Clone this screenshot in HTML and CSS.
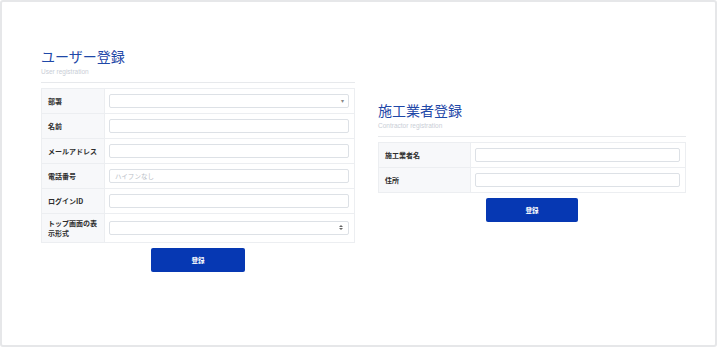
FILE: index.html
```html
<!DOCTYPE html>
<html lang="ja">
<head>
<meta charset="utf-8">
<link rel="stylesheet" href="styles.css">
</head>
<body>
<div class="frame">
  <div class="cols">
    <section class="col col-left">
      <h1 class="title">ユーザー登録</h1>
      <div class="sub">User registration</div>
      <hr class="rule">
      <table class="form">
        <tr><th class="lab">部署</th><td class="cell"><div class="input select"><span class="caret">▾</span></div></td></tr>
        <tr><th class="lab">名前</th><td class="cell"><div class="input"></div></td></tr>
        <tr><th class="lab">メールアドレス</th><td class="cell"><div class="input"></div></td></tr>
        <tr><th class="lab">電話番号</th><td class="cell"><div class="input"><span class="ph">ハイフンなし</span></div></td></tr>
        <tr><th class="lab">ログインID</th><td class="cell"><div class="input"></div></td></tr>
        <tr><th class="lab two">トップ画面の表示形式</th><td class="cell"><div class="input select"><span class="updown"><span class="tri up"></span><span class="tri down"></span></span></div></td></tr>
      </table>
      <div class="btnrow"><button class="btn btn-left">登録</button></div>
    </section>
    <section class="col col-right">
      <h1 class="title">施工業者登録</h1>
      <div class="sub">Contractor registration</div>
      <hr class="rule">
      <table class="form form-right">
        <tr><th class="lab lab-right">施工業者名</th><td class="cell"><div class="input"></div></td></tr>
        <tr><th class="lab lab-right">住所</th><td class="cell"><div class="input"></div></td></tr>
      </table>
      <div class="btnrow"><button class="btn btn-right">登録</button></div>
    </section>
  </div>
</div>
</body>
</html>
```
FILE: styles.css
```css
html, body {
  margin: 0;
  padding: 0;
  background: #ffffff;
}
body {
  font-family: "Noto Sans CJK JP", "Noto Sans", sans-serif;
  color: #333;
}
.frame {
  box-sizing: border-box;
  width: 717px;
  height: 347px;
  border: 2px solid #e6e7e9;
  border-radius: 3px;
  padding: 44px 0 0 39px;
}
.cols {
  display: flex;
  align-items: center;
  gap: 23px;
}
.col-left { width: 314px; }
.col-right { width: 308px; padding-top: 4px; }
.title {
  margin: 0;
  font-size: 14px;
  line-height: 20px;
  font-weight: 400;
  color: #1f48a8;
}
.sub {
  font-family: "Liberation Sans", "Noto Sans", sans-serif;
  font-size: 6.5px;
  line-height: 9px;
  color: #c9ced6;
  margin-top: 1px;
}
.rule {
  border: 0;
  border-top: 1px solid #e7e9ec;
  margin: 6px 0 5px;
}
.form {
  width: 100%;
  border-collapse: collapse;
  border: 1px solid #eceef1;
}
.form tr { border-bottom: 1px solid #eceef1; }
.lab {
  width: 50px;
  background: #f7f8fa;
  border-right: 1px solid #eceef1;
  text-align: left;
  font-size: 7px;
  line-height: 10px;
  font-weight: 700;
  color: #2d2d2d;
  padding: 4px 6px 4px 6px;
  vertical-align: middle;
}
.lab-right { width: 79px; }
.cell {
  padding: 5px 5px 5px 4px;
  vertical-align: middle;
}
.input {
  box-sizing: border-box;
  height: 14px;
  border: 1px solid #dde1e6;
  border-radius: 2px;
  background: #fff;
  display: flex;
  align-items: center;
  padding: 0 5px;
  position: relative;
}
.ph {
  font-size: 6.5px;
  color: #b9bec6;
}
.caret {
  position: absolute;
  right: 4px;
  top: 0;
  font-size: 6px;
  line-height: 12px;
  color: #888;
}
.updown {
  position: absolute;
  right: 5px;
  top: 3px;
  display: flex;
  flex-direction: column;
  gap: 1px;
}
.tri {
  width: 0;
  height: 0;
  border-left: 2px solid transparent;
  border-right: 2px solid transparent;
}
.tri.up { border-bottom: 2.5px solid #666; }
.tri.down { border-top: 2.5px solid #666; }
.btnrow {
  display: flex;
  justify-content: center;
  margin-top: 5px;
}
.btn {
  height: 24px;
  border: 0;
  border-radius: 2px;
  background: #0638b3;
  color: #fff;
  font-family: "Noto Sans CJK JP", sans-serif;
  font-size: 6.5px;
  font-weight: 700;
  padding: 0;
}
.btn-left { width: 94px; }
.btn-right { width: 92px; }
```
